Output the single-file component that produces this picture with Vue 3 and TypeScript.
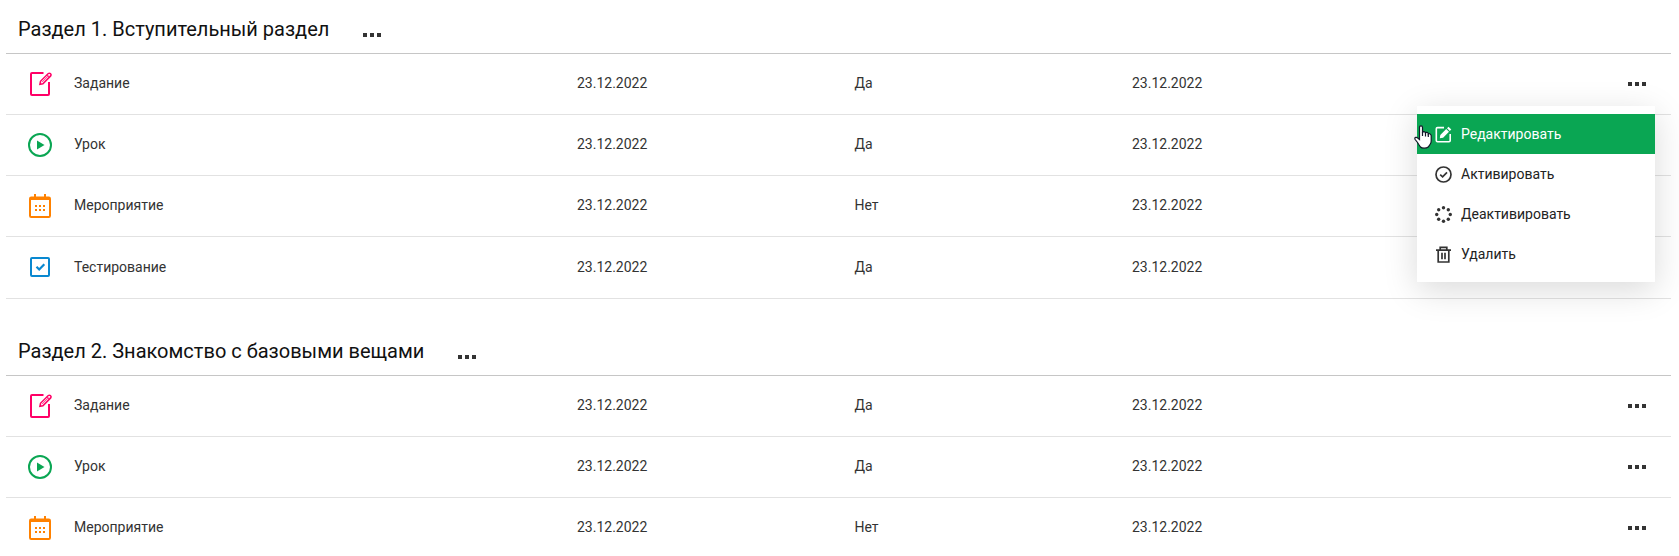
<script setup lang="ts">
type Kind = 'task' | 'lesson' | 'event' | 'test'
interface Item { kind: Kind; start: string; active: string; end: string }
interface Section { title: string; items: Item[] }

const names: Record<Kind, string> = {
  task: 'Задание',
  lesson: 'Урок',
  event: 'Мероприятие',
  test: 'Тестирование',
}

const item = (kind: Kind, active: string): Item => ({ kind, active, start: '23.12.2022', end: '23.12.2022' })

const sections: Section[] = [
  {
    title: 'Раздел 1. Вступительный раздел',
    items: [item('task', 'Да'), item('lesson', 'Да'), item('event', 'Нет'), item('test', 'Да')],
  },
  {
    title: 'Раздел 2. Знакомство с базовыми вещами',
    items: [item('task', 'Да'), item('lesson', 'Да'), item('event', 'Нет')],
  },
]

const actions = [
  { id: 'edit', label: 'Редактировать' },
  { id: 'activate', label: 'Активировать' },
  { id: 'deactivate', label: 'Деактивировать' },
  { id: 'remove', label: 'Удалить' },
]

const ring = Array.from({ length: 8 }, (_, i) => ({
  x: 8.5 + 6.8 * Math.sin((i * Math.PI) / 4),
  y: 8.5 - 6.8 * Math.cos((i * Math.PI) / 4),
}))
</script>

<template>
  <main class="page">
    <section v-for="(section, s) in sections" :key="s" class="section">
      <header class="section-head">
        <h2 class="section-title">{{ section.title }}</h2>
        <button class="dots head-dots" type="button" aria-label="Меню"><i /><i /><i /></button>
      </header>
      <div v-for="(row, r) in section.items" :key="r" class="row">
        <div class="cell name">
          <svg v-if="row.kind === 'task'" class="icon task" viewBox="0 0 24 24">
            <path d="M15.500 1H4Q3 1 3 2V22Q3 23 4 23H20Q21 23 21 22V10" stroke-width="2" />
            <path d="M11.900 12.300L12.500 9.300L20.300 1.500Q21.300.8 22.500 1.700Q23.500 2.700 22.700 3.900L14.900 11.700Z" stroke-width="1.500" />
            <path d="M14 10.200L20.800 3.400M18.800 2.900L21.100 5.200" stroke-width=".8" />
          </svg>
          <svg v-else-if="row.kind === 'lesson'" class="icon lesson" viewBox="0 0 24 24">
            <circle cx="12" cy="12" r="11" stroke-width="2" />
            <path class="fill" d="M9 7.500L16.500 12L9 16.500Z" />
          </svg>
          <svg v-else-if="row.kind === 'event'" class="icon event" viewBox="0 0 24 24">
            <rect x="2" y="3.500" width="20" height="19.500" rx="1.200" stroke-width="2" />
            <path d="M2 5H22M7 0V4M17 0V4" stroke-width="2" />
            <path d="M7 12H17M7 16H17" stroke-width="2" stroke-dasharray="2 2" />
          </svg>
          <svg v-else class="icon test" viewBox="0 0 24 24">
            <rect x="3" y="3" width="18" height="18" rx="1" stroke-width="2" />
            <path d="M8.500 11.800L11.200 14.500L16.300 9.200" stroke-width="2.200" />
          </svg>
          <span>{{ names[row.kind] }}</span>
        </div>
        <div class="cell">{{ row.start }}</div>
        <div class="cell">{{ row.active }}</div>
        <div class="cell">{{ row.end }}</div>
        <div class="cell actions">
          <button class="dots" type="button" aria-label="Меню"><i /><i /><i /></button>
          <div v-if="s === 0 && r === 0" class="menu">
            <div v-for="action in actions" :key="action.id" class="menu-item" :class="{ hovered: action.id === 'edit' }">
              <svg class="menu-icon" viewBox="0 0 17 17">
                <template v-if="action.id === 'edit'">
                  <path d="M9 1.600H2.500Q1.300 1.600 1.300 2.800V14.500Q1.300 15.700 2.500 15.700H14Q15.200 15.700 15.200 14.500V8" stroke-width="1.600" />
                  <path class="fill" d="M4.800 12.200L5.300 8.900L11.200 3L14 5.800L8.100 11.700ZM12 2.200L13.500.7L16.300 3.500L14.800 5Z" />
                </template>
                <template v-else-if="action.id === 'activate'">
                  <circle cx="8.500" cy="8.500" r="7.500" stroke-width="1.700" />
                  <path d="M5.200 8.700L7.600 10.900L12 6.300" stroke-width="1.700" />
                </template>
                <template v-else-if="action.id === 'deactivate'">
                  <circle v-for="(dot, d) in ring" :key="d" class="fill" :cx="dot.x" :cy="dot.y" r="1.700" />
                </template>
                <template v-else>
                  <path d="M1 4.200H16M5.200 4V1.400H11.800V4M3.200 4.500V16H13.800V4.500M7 6.800V13.300M10 6.800V13.300" stroke-width="1.700" />
                </template>
              </svg>
              <span>{{ action.label }}</span>
            </div>
            <svg class="pointer" viewBox="0 0 18 24">
              <path
                d="M5.500 14.500V2.600Q5.500.8 7 .8T8.500 2.600V7.500Q8.800 6.500 10 6.600T11.500 8Q11.800 7.200 13 7.400T14.300 8.900Q14.700 8.300 15.700 8.700T17.200 10.500V16Q17.200 18 16 19.500Q15 21 14.300 22Q12.500 23.300 10 23.200T6.500 22Q5 20 3.500 17.500L1 14.300Q.5 12.800 1.700 12.400T4 13.200Z"
              />
              <path class="knuckles" d="M8.500 7V11M11.500 8V11.500M14.300 9V12" />
            </svg>
          </div>
        </div>
      </div>
    </section>
  </main>
</template>

<style>
body {
  background: #fff;
  overflow: hidden;
}
</style>

<style scoped>
.page {
  height: 556px;
  box-sizing: border-box;
  padding: 0 8px 0 6px;
  overflow: hidden;
  font: 14px/20px Roboto, "Liberation Sans", sans-serif;
  color: #333;
}
.section {
  margin-bottom: 23px;
}
.section-head {
  display: flex;
  align-items: flex-start;
  box-sizing: border-box;
  height: 54px;
  padding: 16px 12px 0;
  border-bottom: 1px solid #c6c6c6;
}
.section-title {
  margin: 0;
  font-size: 20px;
  line-height: 26px;
  font-weight: 400;
  color: #111;
  white-space: nowrap;
}
.dots {
  display: flex;
  gap: 3px;
  padding: 0;
  border: 0;
  background: none;
}
.dots i {
  width: 4px;
  height: 4px;
  background: #333;
}
.head-dots {
  margin: 17px 0 0 34px;
}
.row {
  display: grid;
  grid-template-columns: 2fr 1fr 1fr 1fr 1fr;
  box-sizing: border-box;
  height: 61px;
  border-bottom: 1px solid #e2e2e2;
}
.row:nth-child(5) {
  height: 62px;
}
.row:nth-child(5) .cell {
  padding-top: 20px;
}
.cell {
  padding: 19px 16px 0;
}
.name {
  display: flex;
  align-items: flex-start;
}
.icon {
  width: 24px;
  height: 24px;
  margin: -1px 22px 0 6px;
  fill: none;
  stroke: currentColor;
}
.row:nth-child(5) .icon {
  margin-top: -2px;
}
.fill {
  fill: currentColor;
  stroke: none;
}
.task { color: #ff0066; }
.lesson { color: #0aa653; }
.event { color: #ff8100; }
.test { color: #0988d0; }
.actions {
  display: flex;
  justify-content: flex-end;
  align-items: flex-start;
  position: relative;
  padding-right: 25px;
}
.actions .dots {
  margin-top: 9px;
}
.row:nth-child(5) .actions .dots {
  margin-top: 8px;
}
.menu {
  position: absolute;
  z-index: 2;
  top: 52px;
  right: 16px;
  width: 238px;
  box-sizing: border-box;
  padding: 8px 0;
  background: #fff;
  box-shadow: 0 8px 32px rgba(0, 0, 0, 0.15);
  color: #222;
}
.menu-item {
  display: flex;
  align-items: center;
  height: 40px;
  padding-left: 17.5px;
}
.menu-icon {
  width: 17px;
  height: 17px;
  margin-right: 9.5px;
  fill: none;
  stroke: currentColor;
  color: #333;
}
.hovered,
.hovered .menu-icon {
  color: #fff;
}
.hovered {
  background: #0aa653;
}
.pointer {
  position: absolute;
  left: -3px;
  top: 19px;
  width: 18px;
  height: 24px;
  fill: #fff;
  stroke: #111827;
  stroke-width: 1.2;
}
.knuckles {
  fill: none;
}
</style>
